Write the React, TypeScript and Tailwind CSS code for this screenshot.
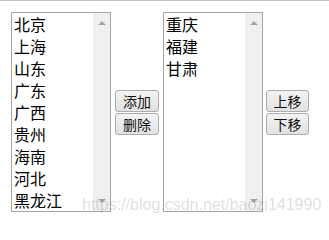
const left = ["北京", "上海", "山东", "广东", "广西", "贵州", "海南", "河北", "黑龙江"];
const right = ["重庆", "福建", "甘肃"];

function ListBox({ items }: { items: string[] }) {
  return (
    <div className="flex h-[200px] w-[100px] shrink-0 border border-[#a6a6a6] bg-white">
      <div className="flex-1 overflow-hidden pl-[2px] text-[16px] leading-[22px] text-black">
        {items.map((s) => (
          <div key={s} className="whitespace-nowrap">
            {s}
          </div>
        ))}
      </div>
      <div className="flex w-[17px] flex-col items-center justify-between bg-[#f0f0f0] py-[8px]">
        <div className="h-0 w-0 border-x-[4px] border-b-[4px] border-x-transparent border-b-[#a3a3a3]" />
        <div className="h-0 w-0 border-x-[4px] border-t-[4px] border-x-transparent border-t-[#a3a3a3]" />
      </div>
    </div>
  );
}

function Btn({ label, w }: { label: string; w: string }) {
  return (
    <button
      className={`${w} flex h-[22px] items-center justify-center rounded-[3px] border border-[#acacac] bg-gradient-to-b from-[#f3f3f3] to-[#e2e2e2] text-[14px] leading-none text-[#111]`}
    >
      {label}
    </button>
  );
}

export default function App() {
  return (
    <div
      className="relative h-[224px] w-[329px] overflow-hidden border-t border-[#c4c4c4] bg-white"
      style={{ fontFamily: '"Noto Sans CJK SC", "Liberation Sans", sans-serif' }}
    >
      <div className="flex items-center pl-[11px] pt-[11px]">
        <ListBox items={left} />
        <div className="ml-[4px] flex flex-col gap-[1px]">
          <Btn label="添加" w="w-[44px]" />
          <Btn label="删除" w="w-[44px]" />
        </div>
        <div className="ml-[4px]">
          <ListBox items={right} />
        </div>
        <div className="ml-[3px] flex flex-col gap-[1px]">
          <Btn label="上移" w="w-[43px]" />
          <Btn label="下移" w="w-[43px]" />
        </div>
      </div>
      <div className="pointer-events-none absolute left-[82px] top-[196px] whitespace-nowrap font-['Liberation_Sans',sans-serif] text-[16px] leading-none text-black/15">
        https://blog.csdn.net/baozi141990
      </div>
    </div>
  );
}
